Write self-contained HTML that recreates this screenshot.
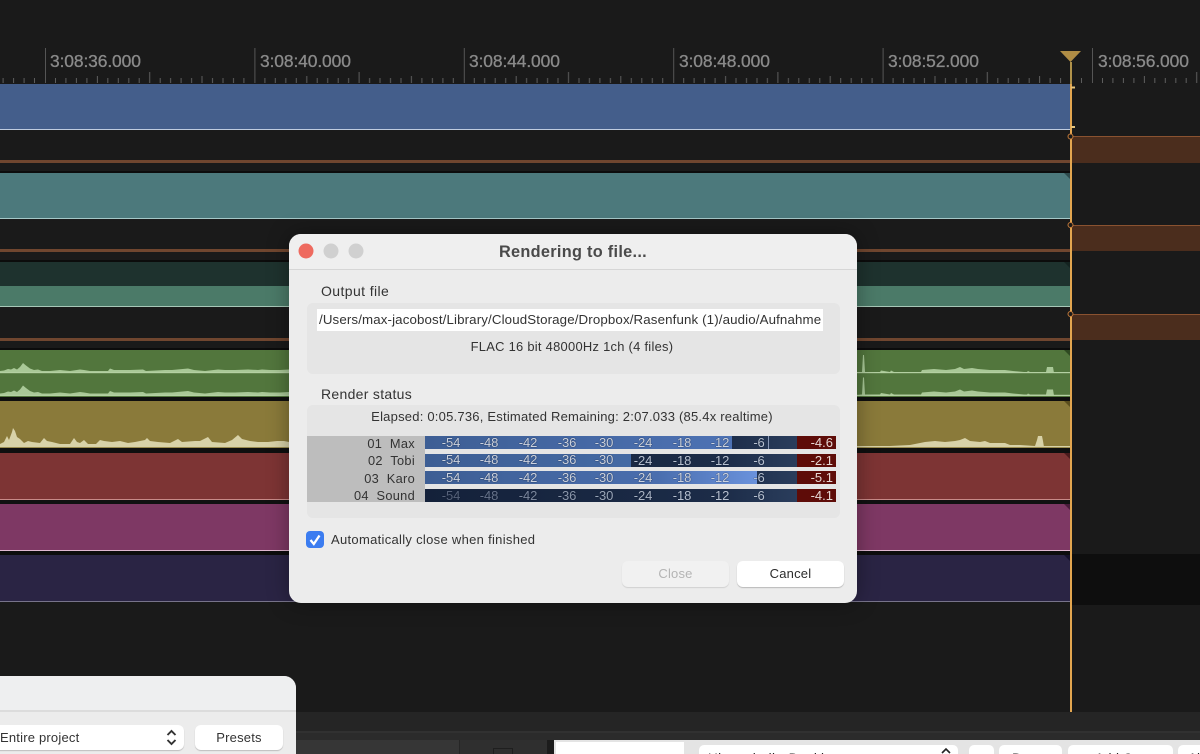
<!DOCTYPE html>
<html><head><meta charset="utf-8"><style>
html,body{margin:0;padding:0;background:#1a1a1a}
#p{position:relative;width:1200px;height:754px;overflow:hidden;background:#1a1a1a;font-family:"Liberation Sans",sans-serif}
#p div{position:absolute;box-sizing:border-box}
.t{white-space:pre;line-height:16px;height:16px}
.rl{top:52px;font-size:17.4px;color:#8a8a8a;letter-spacing:-.1px;line-height:18px;white-space:pre;-webkit-text-stroke:.3px #8a8a8a}
.n{font-size:13px;color:#ccd3e0;text-shadow:0 0 1px #0a1428;line-height:13px;height:13px;width:30px;text-align:center;letter-spacing:-.1px;white-space:pre}
.d{color:#b6c0d0}
.lb{left:307px;width:108px;text-align:right;font-size:12.8px;color:#333;line-height:13px;height:13px;white-space:pre;letter-spacing:.3px}
.v{left:797px;width:36px;text-align:right;font-size:13px;color:#e6d8d4;line-height:13px;height:13px}
.c{clip-path:polygon(0 0,100% 0,100% 100%)}
</style></head><body><div id="p">

<svg style="position:absolute;left:0;top:0" width="1200" height="754">
<defs><pattern id="tk" patternUnits="userSpaceOnUse" width="209.4" height="40" patternTransform="translate(45 48)">
<g stroke="#5e5e5e" stroke-width="1">
<path d="M10.5 30V35M20.9 30V35M31.4 30V35M41.9 30V35M62.8 30V35M73.3 30V35M83.8 30V35M94.2 30V35M115.2 30V35M125.6 30V35M136.1 30V35M146.6 30V35M167.5 30V35M178 30V35M188.5 30V35M198.9 30V35"/>
<path d="M52.4 28V35M157 28V35"/><path d="M104.7 24V35"/>
</g><path d="M.5 0V35" stroke="#555"/></pattern></defs>
<rect x="0" y="48" width="1200" height="35" fill="url(#tk)"/>
</svg>
<div class="rl" style="left:50px">3:08:36.000</div>
<div class="rl" style="left:260px">3:08:40.000</div>
<div class="rl" style="left:469px">3:08:44.000</div>
<div class="rl" style="left:679px">3:08:48.000</div>
<div class="rl" style="left:888px">3:08:52.000</div>
<div class="rl" style="left:1098px">3:08:56.000</div>

<div style="left:0;top:84px;width:1070px;height:46px;background:#445e8b;border-bottom:1.5px solid #c0cce0"></div>
<div style="left:0;top:160px;width:1070px;height:2.5px;background:#70462f"></div>
<div style="left:0;top:171px;width:1070px;height:2px;background:#0c0c0c"></div>
<div style="left:0;top:173px;width:1070px;height:46px;background:#4c797c;border-bottom:1.5px solid #a5c8c8"></div>
<div class="c" style="left:1064px;top:173px;width:6px;height:6px;background:#2d4a4c"></div>
<div style="left:0;top:249px;width:1070px;height:2.5px;background:#70462f"></div>
<div style="left:0;top:260px;width:1070px;height:2px;background:#0c0c0c"></div>
<div style="left:0;top:262px;width:1070px;height:23.5px;background:#1e322e"></div>
<div style="left:0;top:286px;width:1070px;height:21px;background:#4b7a68;border-bottom:1.5px solid #a8c8b8"></div>
<div style="left:0;top:338px;width:1070px;height:2.5px;background:#70462f"></div>
<div style="left:0;top:348px;width:1070px;height:2px;background:#0c0c0c"></div>
<div style="left:0;top:350px;width:1070px;height:47px;background:#52763d"></div>
<div style="left:0;top:397px;width:1070px;height:4px;background:#0f0f0f"></div>
<div style="left:0;top:401px;width:1070px;height:47px;background:#8a7a3a"></div>
<div style="left:0;top:448px;width:1070px;height:5px;background:#0f0f0f"></div>
<div style="left:0;top:453px;width:1070px;height:46.5px;background:#7d3434;border-bottom:1.5px solid #c88a88"></div>
<div style="left:0;top:504px;width:1070px;height:46.5px;background:#7e3864;border-bottom:1.5px solid #e0b8d0"></div>
<div style="left:0;top:555px;width:1070px;height:46.5px;background:#2a2444;border-bottom:1.5px solid #77738a"></div>
<div style="left:0;top:500px;width:1070px;height:4px;background:#111"></div>
<div style="left:0;top:551px;width:1070px;height:4px;background:#0d0d0d"></div>
<div style="left:1071px;top:554px;width:129px;height:51px;background:#0e0e0e"></div>
<div class="c" style="left:1064px;top:262px;width:6px;height:6px;background:#142320"></div>
<div class="c" style="left:1064px;top:350px;width:6px;height:6px;background:#2e4a22"></div>
<div class="c" style="left:1064px;top:401px;width:6px;height:6px;background:#5a4e1e"></div>
<div class="c" style="left:1064px;top:453px;width:6px;height:6px;background:#4a1a1c"></div>
<div class="c" style="left:1064px;top:504px;width:6px;height:6px;background:#4a1c3a"></div>
<div class="c" style="left:1064px;top:555px;width:6px;height:6px;background:#15112a"></div>

<div style="left:1071px;top:136px;width:129px;height:27px;background:#4b2d1d;border-top:1px solid #8a5230"></div>
<div style="left:1071px;top:225px;width:129px;height:26px;background:#4b2d1d;border-top:1px solid #8a5230"></div>
<div style="left:1071px;top:314px;width:129px;height:26px;background:#4b2d1d;border-top:1px solid #8a5230"></div>

<svg style="position:absolute;left:0;top:0" width="1200" height="754">
<defs>
<polygon id="gl" fill="#a9c897" points="0,373 0,371 4,370.5 8,369 11,369.5 14,368 17,369.5 20,367 23,363 26,365.5 30,368.5 34,370 38,369.5 42,371 50,371 60,370 70,371 80,369.5 84,370 90,371 108,371 110,368.5 114,370 130,370 143,369.5 146,371 165,370 172,370 188,368.5 194,370 205,371 218,369.5 225,370 235,370 248,369.5 258,370 262,369.5 270,370 280,370 289,369.5 289,373"/>
<polygon id="gr" fill="#a9c897" points="857,373 861,372 862,372 863,355 864,355 865,372 880,372 881,370.5 890,372 891,370.5 894,372 921,372 922,370 934,369 946,370 955,369 960,367 964,369 972,368 978,369 990,370 1005,370 1013,371 1024,372 1027,372 1028,371 1030,372 1046,372 1047,367 1053,367 1054,373"/>
</defs>
<use href="#gl"/><use href="#gl" y="22.5"/><use href="#gr"/><use href="#gr" y="22.5"/>
<rect x="0" y="372" width="1070" height="1.2" fill="#b4d0a2"/>
<rect x="0" y="394.8" width="1070" height="1.2" fill="#b4d0a2"/>
<polygon fill="#d8d2a8" points="0,447 0,444 4,442 7,436 9,440 12,432 13,428 15,431 17,437 20,439 24,443 28,441 32,442 40,443 44,438 47,441 52,442 60,444 70,444 74,438 77,442 80,443 84,440 88,444 96,444 100,440 104,441 112,442 120,441 128,443 135,442 145,440 147,438 150,441 158,442 170,443 178,439 182,442 195,441 200,441 208,437 212,442 225,443 232,440 238,435 242,439 250,441 258,442 268,442 277,441 284,441 289,442 289,447"/>
<polygon fill="#d8d2a8" points="857,447 870,446 880,446 885,446 890,446 910,445 915,444 925,442 935,441 945,442 955,441 960,440 965,438 970,441 980,442 985,441 990,443 1000,443 1005,443 1010,445 1020,445 1035,446 1037,440 1038,436 1042,436 1043,441 1044,447"/>
<rect x="0" y="446" width="1070" height="1.2" fill="#d8d2a8"/>
</svg>

<div style="left:0;top:712px;width:1200px;height:19px;background:#252525"></div>
<div style="left:0;top:731px;width:1200px;height:2px;background:#313131"></div>
<div style="left:0;top:733px;width:1200px;height:7px;background:#2b2b2b"></div>
<div style="left:0;top:740px;width:459px;height:14px;background:#363636"></div>
<div style="left:459px;top:740px;width:88px;height:14px;background:#2f2f2f;border-left:1px solid #262626"></div>
<div style="left:493px;top:748px;width:20px;height:6px;border:1px solid #1f1f1f;border-bottom:0"></div>
<div style="left:547px;top:740px;width:7px;height:14px;background:#1c1c1c"></div>
<div style="left:554px;top:740px;width:646px;height:14px;background:#e4e4e4"></div>
<div style="left:556px;top:742px;width:128px;height:12px;background:#fff"></div>
<div style="left:699px;top:745px;width:259px;height:12px;background:#fff;border-radius:5px 5px 0 0"></div>
<div style="left:969px;top:745px;width:25px;height:12px;background:#fff;border-radius:5px 5px 0 0"></div>
<div style="left:999px;top:745px;width:63px;height:12px;background:#fff;border-radius:5px 5px 0 0"></div>
<div style="left:1068px;top:745px;width:105px;height:12px;background:#fff;border-radius:5px 5px 0 0"></div>
<div style="left:1178px;top:745px;width:30px;height:12px;background:#fff;border-radius:5px 5px 0 0"></div>
<div class="t" style="left:708px;top:751px;font-size:13.5px;color:#222;letter-spacing:.4px">Ultraschall - Docking</div>
<div class="t" style="left:1012px;top:751px;font-size:13.5px;color:#222">Dump</div>
<div class="t" style="left:1095px;top:751px;font-size:13.5px;color:#222">Add Cart</div>
<div class="t" style="left:1188px;top:751px;font-size:13.5px;color:#222">All</div>
<svg style="position:absolute;left:940px;top:747px" width="12" height="7"><path d="M2 6L6 2L10 6" fill="none" stroke="#222" stroke-width="1.6"/></svg>

<div style="left:-20px;top:676px;width:316px;height:90px;background:#ececec;border-radius:12px 12px 0 0;overflow:hidden">
<div style="left:0;top:0;width:316px;height:36px;background:#eeeff0;border-bottom:2px solid #dcdcdc"></div>
</div>
<div style="left:-10px;top:725px;width:194px;height:25px;background:#fff;border-radius:6px;box-shadow:0 1px 1px rgba(0,0,0,.2)"></div>
<div class="t" style="left:0;top:730px;font-size:13px;color:#333;letter-spacing:.2px">Entire project</div>
<svg style="position:absolute;left:165px;top:729px" width="13" height="17"><path d="M2.5 6L6.5 2L10.5 6M2.5 11L6.5 15L10.5 11" fill="none" stroke="#333" stroke-width="1.9"/></svg>
<div style="left:195px;top:725px;width:88px;height:25px;background:#fff;border-radius:6px;box-shadow:0 1px 1px rgba(0,0,0,.2)"></div>
<div class="t" style="left:195px;width:88px;top:730px;font-size:13px;color:#333;text-align:center;letter-spacing:.2px">Presets</div>

<div style="left:1070px;top:62px;width:1.5px;height:22px;background:#b0924a"></div>
<div style="left:1070px;top:84px;width:1.5px;height:628px;background:#e3a650"></div>
<svg style="position:absolute;left:1059px;top:50px" width="23" height="14"><polygon points="1,1 22,1 11.5,12" fill="#b08d45"/></svg>
<svg style="position:absolute;left:1065px;top:84px" width="12" height="50"><path d="M6 3.5H10M6 43H10" stroke="#e8c47a" stroke-width="2" fill="none"/></svg>
<svg style="position:absolute;left:1065px;top:132px" width="11" height="190" fill="#1a1a1a" stroke="#c47a3a"><circle cx="5.5" cy="4.5" r="2.5"/><circle cx="5.5" cy="93" r="2.5"/><circle cx="5.5" cy="182" r="2.5"/></svg>

<div style="left:289px;top:234px;width:568px;height:369px;background:#ececec;border-radius:12px;box-shadow:0 0 22px rgba(0,0,0,.35)"></div>
<div style="left:289px;top:234px;width:568px;height:36px;background:#efefef;border-radius:12px 12px 0 0;border-bottom:1px solid #d6d6d6"></div>
<svg style="position:absolute;left:295px;top:240px" width="75" height="22"><circle cx="11" cy="11" r="7.5" fill="#ee6a5f"/><circle cx="36" cy="11" r="7.5" fill="#d0d0d0"/><circle cx="61" cy="11" r="7.5" fill="#d0d0d0"/></svg>
<div class="t" style="left:289px;width:568px;top:243px;height:18px;line-height:18px;text-align:center;font-size:16.3px;font-weight:bold;color:#4a4a4a;letter-spacing:.3px">Rendering to file...</div>

<div class="t" style="left:321px;top:283px;font-size:14px;color:#333;letter-spacing:.4px">Output file</div>
<div style="left:307px;top:303px;width:533px;height:71px;background:#e5e5e5;border-radius:6px"></div>
<div style="left:317px;top:309px;width:506px;height:22px;background:#fff"></div>
<div class="t" style="left:319px;top:312px;font-size:13.3px;color:#333;letter-spacing:.13px">/Users/max-jacobost/Library/CloudStorage/Dropbox/Rasenfunk (1)/audio/Aufnahme</div>
<div class="t" style="left:307px;width:530px;top:339px;font-size:12.9px;color:#333;text-align:center;letter-spacing:.28px">FLAC 16 bit 48000Hz 1ch (4 files)</div>

<div class="t" style="left:321px;top:386px;font-size:14px;color:#333;letter-spacing:.3px">Render status</div>
<div style="left:307px;top:405px;width:533px;height:113px;background:#e5e5e5;border-radius:6px"></div>
<div class="t" style="left:307px;width:530px;top:409px;font-size:13px;color:#333;text-align:center;letter-spacing:.22px">Elapsed: 0:05.736, Estimated Remaining: 2:07.033 (85.4x realtime)</div>

<div style="left:307px;top:436px;width:118px;height:66px;background:#bdbdbd"></div>
<div style="left:425px;top:436px;width:372px;height:13px;background:linear-gradient(90deg,#14213a,#1c2c48 80%,#2a3d5c)"></div>
<div style="left:425px;top:454px;width:372px;height:13px;background:linear-gradient(90deg,#14213a,#1c2c48 80%,#2a3d5c)"></div>
<div style="left:425px;top:471px;width:372px;height:13px;background:linear-gradient(90deg,#14213a,#1c2c48 80%,#2a3d5c)"></div>
<div style="left:425px;top:489px;width:372px;height:13px;background:linear-gradient(90deg,#14213a,#1c2c48 80%,#2a3d5c)"></div>
<div style="left:425px;top:436px;width:307px;height:13px;background:linear-gradient(90deg,#3d5e94,#4d72b4)"></div>
<div style="left:425px;top:454px;width:206px;height:13px;background:linear-gradient(90deg,#3d5e94,#446aa4)"></div>
<div style="left:425px;top:471px;width:332px;height:13px;background:linear-gradient(90deg,#3d5e94,#4a6eae 70%,#6a92dc)"></div>
<div style="left:768px;top:436px;width:1px;height:13px;background:#8a9ab8"></div>
<div style="left:797px;top:436px;width:39px;height:13px;background:#5e0c08"></div>
<div style="left:797px;top:454px;width:39px;height:13px;background:#5e0c08"></div>
<div style="left:797px;top:471px;width:39px;height:13px;background:#5e0c08"></div>
<div style="left:797px;top:489px;width:39px;height:13px;background:#5e0c08"></div>

<div class="lb" style="top:437px">01  Max</div>
<div class="lb" style="top:454px">02  Tobi</div>
<div class="lb" style="top:472px">03  Karo</div>
<div class="lb" style="top:489px">04  Sound</div>

<div class="n" style="left:436px;top:436px">-54</div><div class="n" style="left:474px;top:436px">-48</div><div class="n" style="left:513px;top:436px">-42</div><div class="n" style="left:552px;top:436px">-36</div><div class="n" style="left:589px;top:436px">-30</div><div class="n" style="left:628px;top:436px">-24</div><div class="n" style="left:667px;top:436px">-18</div><div class="n" style="left:705px;top:436px">-12</div><div class="n d" style="left:744px;top:436px">-6</div>
<div class="n" style="left:436px;top:453px">-54</div><div class="n" style="left:474px;top:453px">-48</div><div class="n" style="left:513px;top:453px">-42</div><div class="n" style="left:552px;top:453px">-36</div><div class="n" style="left:589px;top:453px">-30</div><div class="n d" style="left:628px;top:454px">-24</div><div class="n d" style="left:667px;top:454px">-18</div><div class="n d" style="left:705px;top:454px">-12</div><div class="n d" style="left:744px;top:454px">-6</div>
<div class="n" style="left:436px;top:471px">-54</div><div class="n" style="left:474px;top:471px">-48</div><div class="n" style="left:513px;top:471px">-42</div><div class="n" style="left:552px;top:471px">-36</div><div class="n" style="left:589px;top:471px">-30</div><div class="n" style="left:628px;top:471px">-24</div><div class="n" style="left:667px;top:471px">-18</div><div class="n" style="left:705px;top:471px">-12</div><div class="n d" style="left:744px;top:471px">-6</div>
<div class="n" style="left:436px;top:489px;color:#56627a">-54</div><div class="n" style="left:474px;top:489px;color:#66728a">-48</div><div class="n" style="left:513px;top:489px;color:#7a869c">-42</div><div class="n" style="left:552px;top:489px;color:#8a96aa">-36</div><div class="n" style="left:589px;top:489px;color:#9aa6b8">-30</div><div class="n" style="left:628px;top:489px;color:#aab4c4">-24</div><div class="n d" style="left:667px;top:489px">-18</div><div class="n d" style="left:705px;top:489px">-12</div><div class="n d" style="left:744px;top:489px">-6</div>
<div class="v" style="top:436px">-4.6</div><div class="v" style="top:454px">-2.1</div><div class="v" style="top:471px">-5.1</div><div class="v" style="top:489px">-4.1</div>

<div style="left:306px;top:531px;width:18px;height:17px;background:#3b7cf0;border-radius:4px"></div>
<svg style="position:absolute;left:306px;top:531px" width="18" height="17"><path d="M4.5 9L7.8 13L13.5 4.5" fill="none" stroke="#fff" stroke-width="2.3"/></svg>
<div class="t" style="left:331px;top:532px;font-size:13px;color:#333;letter-spacing:.3px">Automatically close when finished</div>

<div style="left:622px;top:561px;width:107px;height:26px;background:#f1f1f1;border-radius:6px;box-shadow:0 1px 1px rgba(0,0,0,.12)"></div>
<div class="t" style="left:622px;width:107px;top:566px;font-size:13px;color:#b4b4b4;text-align:center;letter-spacing:.2px">Close</div>
<div style="left:737px;top:561px;width:107px;height:26px;background:#fff;border-radius:6px;box-shadow:0 1px 1px rgba(0,0,0,.22)"></div>
<div class="t" style="left:737px;width:107px;top:566px;font-size:13px;color:#2c2c2c;text-align:center;letter-spacing:.2px">Cancel</div>

</div></body></html>
